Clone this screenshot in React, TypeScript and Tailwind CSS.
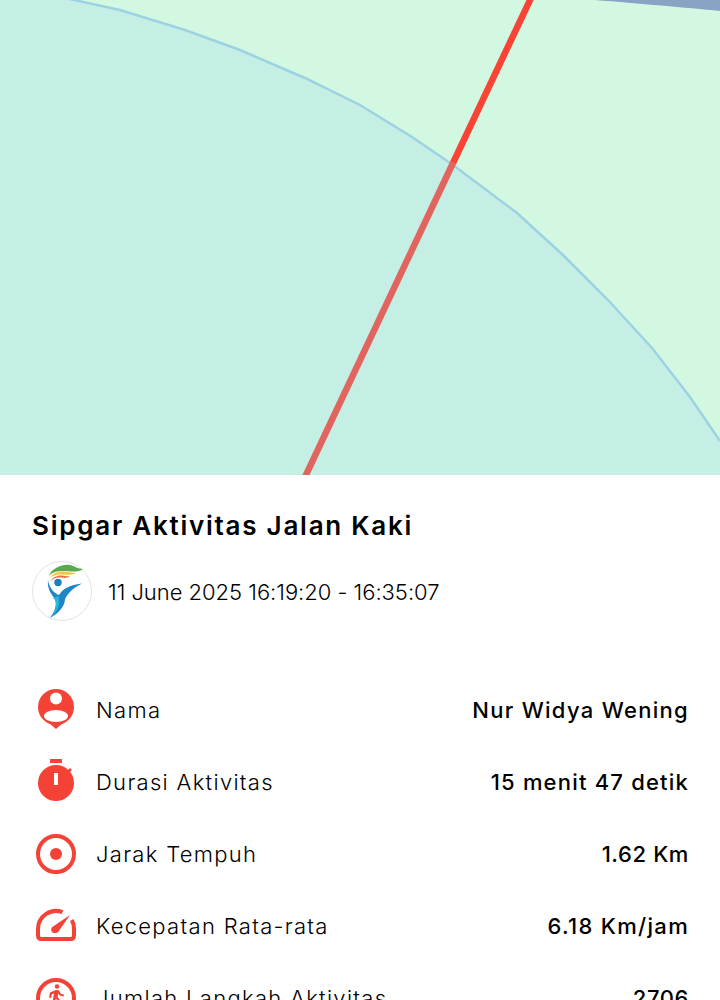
const rows = [
  { label: "Nama", value: "Nur Widya Wening", track: "tracking-[1.3px]", icon: <PersonIcon /> },
  { label: "Durasi Aktivitas", value: "15 menit 47 detik", track: "tracking-[1.2px]", icon: <TimerIcon /> },
  { label: "Jarak Tempuh", value: "1.62 Km", track: "tracking-[0.6px]", icon: <TargetIcon /> },
  { label: "Kecepatan Rata-rata", value: "6.18 Km/jam", track: "tracking-[1.3px]", icon: <GaugeIcon /> },
  { label: "Jumlah Langkah Aktivitas", value: "2706", track: "tracking-[0.6px]", icon: <WalkIcon /> },
];

const curve = "M65 -2L120 10L185 30L240 50L305 78L360 105L412 137L453 165L517 213L563 255L608 300L652 348L690 397L720 441";

function PersonIcon() {
  return (
    <svg width="48" height="48" viewBox="0 0 48 48" className="block">
      <circle cx="24" cy="21" r="18" fill="#f44336" />
      <path d="M17 37h14l-7 6z" fill="#f44336" />
      <circle cx="24" cy="12.500" r="6" fill="#fff" />
      <ellipse cx="24" cy="30" rx="12" ry="6" fill="#fff" />
    </svg>
  );
}

function TimerIcon() {
  return (
    <svg width="48" height="48" viewBox="0 0 48 48" className="block">
      <rect x="18" y="1" width="12" height="4" fill="#f44336" />
      <circle cx="24" cy="25" r="18" fill="#f44336" />
      <path d="M35 13l3-3 2 2-3 3z" fill="#f44336" />
      <rect x="22" y="15" width="4" height="12" fill="#fff" />
    </svg>
  );
}

function TargetIcon() {
  return (
    <svg width="48" height="48" viewBox="0 0 48 48" className="block">
      <circle cx="24" cy="24" r="18" fill="none" stroke="#f44336" strokeWidth="4" />
      <circle cx="24" cy="24" r="6" fill="#f44336" />
    </svg>
  );
}

function GaugeIcon() {
  return (
    <svg width="48" height="48" viewBox="0 0 48 48" className="block">
      <path d="M30.500 10.200A18 18 0 0 0 6 27V33Q6 37 9 37H39Q42 37 42 33V27A18 18 0 0 0 39.800 18" fill="none" stroke="#f44336" strokeWidth="4" />
      <path d="M38 13L26.500 29.500C25 31.500 21.500 31.500 20 30C18.500 28 19 25.500 21 24.500Z" fill="#f44336" />
    </svg>
  );
}

function WalkIcon() {
  return (
    <svg width="48" height="48" viewBox="0 0 48 48" className="block">
      <circle cx="24" cy="24" r="18" fill="none" stroke="#f44336" strokeWidth="4" />
      <circle cx="25" cy="12.500" r="2.200" fill="#f44336" />
      <path d="M24 16l-6 2.500-1 5 2 .4 .8-3.600 2.200-.8-2 12h2.200l1.600-7 2.200 2.500V34h2v-8l-2.400-3 .6-3.500 1.600 2 4 1v-2l-3-.8-2-3.500z" fill="#f44336" />
    </svg>
  );
}

function Logo() {
  return (
    <svg width="60" height="60" viewBox="0 0 60 60" className="block">
      <circle cx="30" cy="30" r="29.500" fill="#fff" stroke="#e2e2e2" strokeWidth="1" />
      <path d="M17 15C20 7 30 3 38 4C43 5 46 8 51 8C46 12 38 10 32 10C25 10 20 11 17 15Z" fill="#5aa84f" />
      <path d="M17 18C20 12 27 10 33 10.500C37 11 40 12 44 11.500C40 15 34 13.500 29 13.500C24 13.500 19 15 17 18Z" fill="#f0c63c" />
      <path d="M18 21C20 16 26 14 30 14.500C33 15 35 15.500 38 15C35 18 30 16.500 27 16.500C23 16.500 20 18 18 21Z" fill="#e9713c" />
      <circle cx="26" cy="21.500" r="3.700" fill="#1d7fc0" />
      <path d="M16 19C17 27 23 33 27 34C30 29 36 24 50 22.500C41 27 36 32 33 38C33 45 27 52 18 57C23 50 25 44 23 38C19 33 15 27 16 19Z" fill="#1d86c4" />
      <path d="M21 37C25 40 26 47 18.500 56.500C25 51 29 44 26.500 35Z" fill="#2ab8d8" />
    </svg>
  );
}

export default function App() {
  return (
    <div className="h-[1000px] overflow-hidden bg-white text-black font-['Inter','Liberation_Sans',sans-serif]">
      <svg width="720" height="475" viewBox="0 0 720 475" className="block bg-[#d3f8e2]">
        <path d={curve + "V475H0V-2Z"} fill="#c5efe4" />
        <path d={curve} fill="none" stroke="#9dd2e3" strokeWidth="2.500" />
        <path d="M570 -2C620 2 680 7 720 11V-2Z" fill="#88a3c4" />
        <path d="M305 477L453 163" fill="none" stroke="#e2645f" strokeWidth="6.500" />
        <path d="M453 163L531 -2" fill="none" stroke="#f94335" strokeWidth="6.500" />
      </svg>
      <div className="px-8">
        <h1 className="mt-[33px] h-[36px] text-[26px] leading-[36px] font-semibold tracking-[1.75px]">Sipgar Aktivitas Jalan Kaki</h1>
        <div className="mt-[17px] flex items-center gap-4">
          <Logo />
          <span className="pt-[2px] text-[22px] font-light tracking-[-0.03px]">11 June 2025 16:19:20 - 16:35:07</span>
        </div>
        <div className="mt-[53px] flex flex-col">
          {rows.map((r) => (
            <div key={r.label} className="flex h-[72px] items-center justify-between">
              <div className="flex items-center gap-4">
                {r.icon}
                <span className="text-[22px] font-light tracking-[1.3px]">{r.label}</span>
              </div>
              <span className={"-mr-px text-[22px] font-[550] " + r.track}>{r.value}</span>
            </div>
          ))}
        </div>
      </div>
    </div>
  );
}
